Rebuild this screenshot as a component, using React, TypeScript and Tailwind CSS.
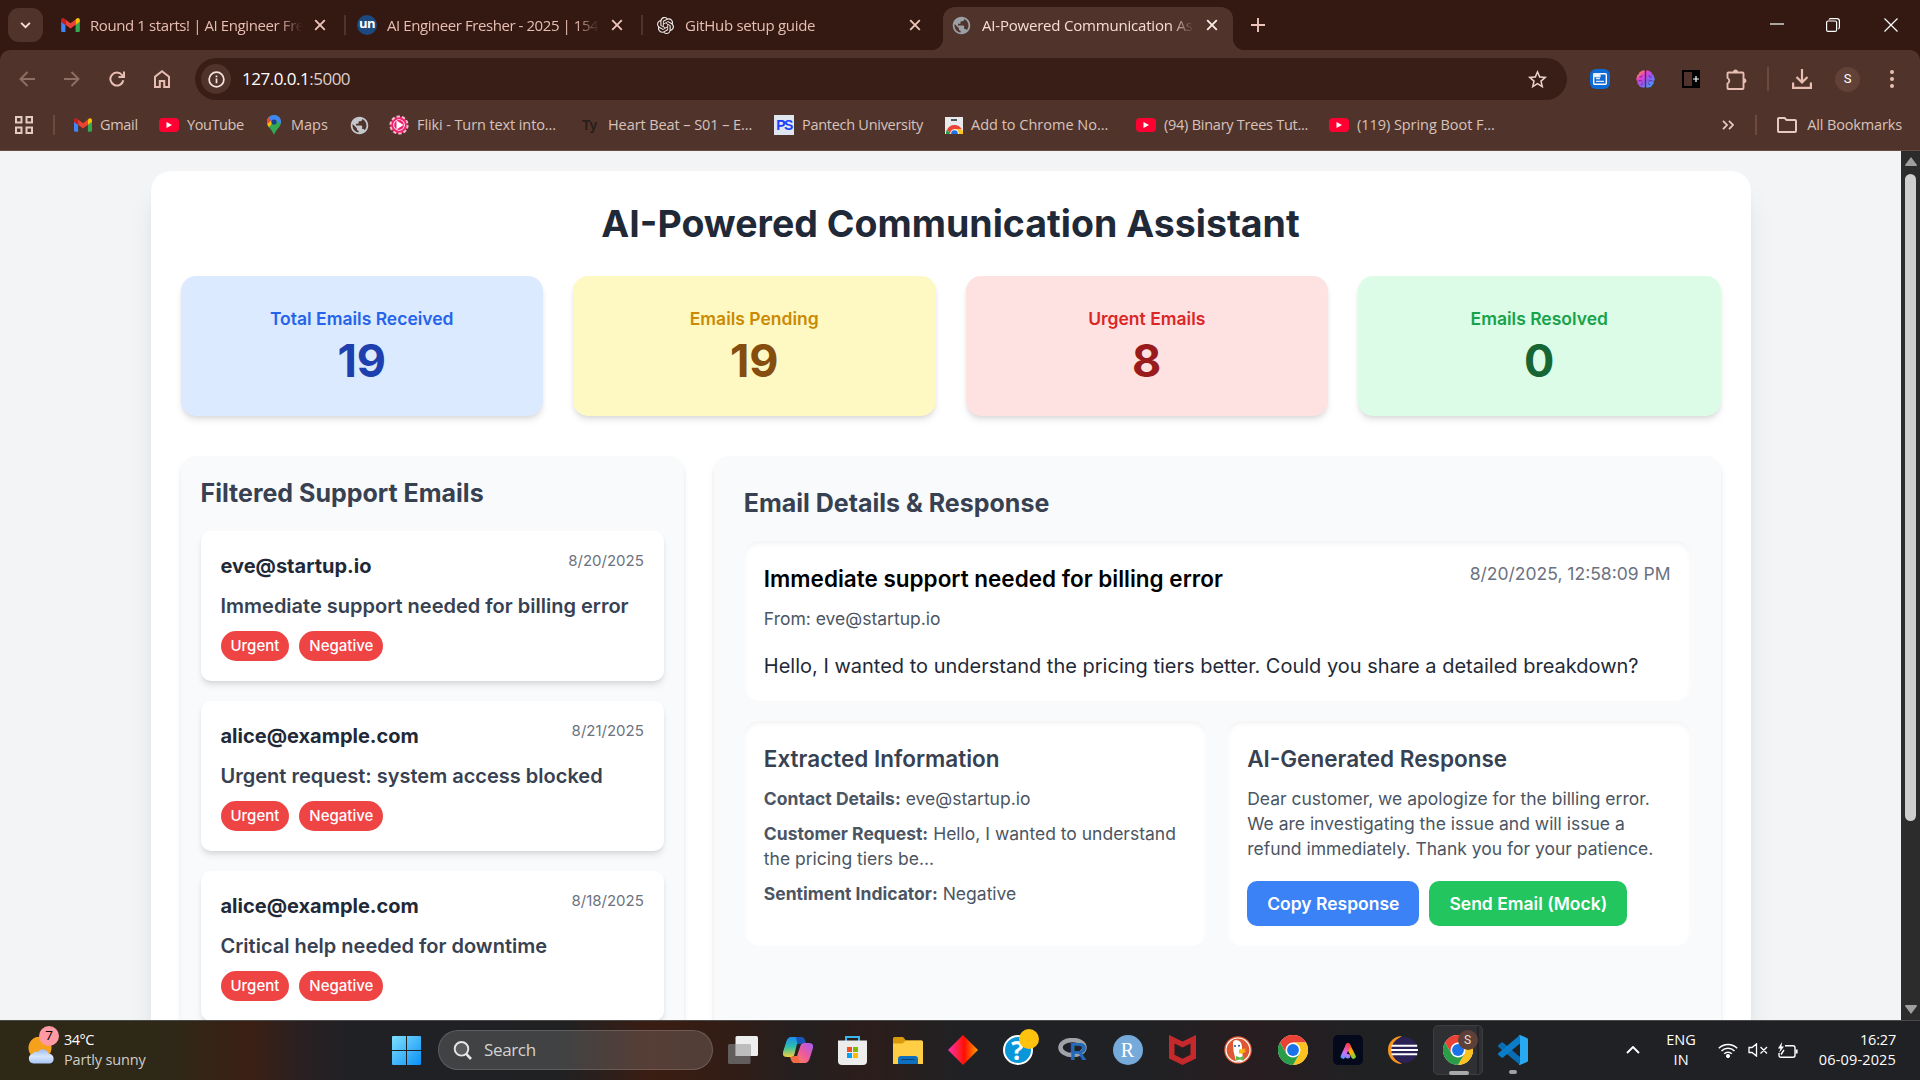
import React from "react";
import { MdPublic, MdOutlineStarBorder, MdOutlineFolder } from "react-icons/md";
import { SiOpenai } from "react-icons/si";

type IconProps = { className?: string };

function GmailIcon({ className = "" }: IconProps) {
  return (
    <svg viewBox="0 0 24 18" className={className}>
      <path d="M0 3v13.4C0 17.3.7 18 1.6 18H5.5V8.6L0 4.4z" fill="#4285f4" />
      <path d="M24 3v13.4c0 .9-.7 1.6-1.6 1.6h-3.9V8.6L24 4.4z" fill="#34a853" />
      <path d="M5.5 1.8v6.8L12 13.5l6.5-4.9V1.8L12 6.7z" fill="#ea4335" />
      <path d="M0 3v1.8l5.5 4.1V1.8L4 .6C2.300-.6 0 .4 0 3z" fill="#c5221f" />
      <path d="M24 3v1.8l-5.500 4.100V1.800L20 .6C21.700-.6 24 .4 24 3z" fill="#fbbc04" />
    </svg>
  );
}

function YouTubeIcon() {
  return (
    <span className="flex h-[14px] w-5 shrink-0 items-center justify-center rounded-[4px] bg-[#ff0033]">
      <svg viewBox="0 0 6 6" className="size-[6px]"><path d="M.5 0 6 3 .5 6z" fill="#fff" /></svg>
    </span>
  );
}

function MapsIcon() {
  return (
    <svg viewBox="0 0 14 20" className="h-[20px] w-[14px] shrink-0">
      <path d="M7 0C3.200 0 0 3.100 0 7c0 2 .8 3.600 2 5.200C4 14.700 5.800 16.500 7 20c1.200-3.500 3-5.300 5-7.800 1.200-1.600 2-3.200 2-5.200 0-3.900-3.200-7-7-7z" fill="#34a853" />
      <path d="M0 7c0 2 .8 3.600 2 5.200L9.300 3 1.600 2.500C.6 3.700 0 5.200 0 7z" fill="#fbbc04" />
      <path d="M1.600 2.500C.6 3.700 0 5.200 0 7l.3 2L5 4.800z" fill="#ea4335" />
      <path d="M7 0c3.800 0 7 3.100 7 7l-.4 2L9 5 5 7.500 1.600 2.500C2.900.9 4.800 0 7 0z" fill="#4285f4" />
      <circle cx="7" cy="7" r="2.600" fill="#1b3f8f" />
    </svg>
  );
}

function FlikiIcon() {
  return (
    <svg viewBox="0 0 20 20" className="size-5 shrink-0">
      <circle cx="10" cy="10" r="8.600" fill="#f0206c" stroke="#f7b9cb" strokeWidth="2" strokeDasharray="3.400 2" />
      <circle cx="10" cy="10" r="5.800" fill="#fff" />
      <circle cx="10" cy="10" r="4.900" fill="#f0206c" />
      <path d="M7.500 5.500 14.500 10l-7 4.500z" fill="#fff" />
    </svg>
  );
}

function BrainIcon({ className = "" }: IconProps) {
  return (
    <svg viewBox="0 0 20 19" className={className}>
      <defs>
        <linearGradient id="brain" gradientUnits="userSpaceOnUse" x1="2" y1="1" x2="18" y2="18">
          <stop offset="0" stopColor="#ff9a2c" />
          <stop offset=".3" stopColor="#e63fd0" />
          <stop offset=".6" stopColor="#8a5cf5" />
          <stop offset="1" stopColor="#2fb0ff" />
        </linearGradient>
      </defs>
      <path d="M9.300.8v17.400Q7.500 19.300 6 18 3.500 18.500 3 15.800.8 14.500 1.500 12-.6 9.800 1 7.300.8 5 3 4.200 3.300 1.500 5.800 1.300 7.500-.5 9.300.8z" fill="url(#brain)" />
      <path d="M10.700.8v17.400q1.800 1.100 3.300-.2 2.500.5 3-2.200 2.200-1.300 1.500-3.800 2.100-2.200.5-4.700.2-2.300-2-3.100-.3-2.700-2.800-2.900Q12.500-.5 10.700.8z" fill="url(#brain)" />
      <path d="M3.500 7.500Q6 8 6.500 5.500M2.500 11.500q3-1.500 4.500 1M5 15.500q1.500 0 2-1.500M16.500 7.500Q14 8 13.500 5.500M17.500 11.500q-3-1.500-4.500 1M15 15.500q-1.500 0-2-1.500" fill="none" stroke="#5a2a86" strokeWidth=".9" />
    </svg>
  );
}

function ChromeIcon({ className = "" }: IconProps) {
  return (
    <svg viewBox="0 0 48 48" className={className}>
      <circle cx="24" cy="24" r="24" fill="#fff" />
      <path d="M24 12h20.800A24 24 0 0 0 3.200 12l10.400 18z" fill="#ea4335" />
      <path d="M34.400 30 24 48A24 24 0 0 0 44.800 12H24z" fill="#fcc31e" />
      <path d="M13.600 30 3.200 12A24 24 0 0 0 24 48l10.400-18z" fill="#2b9c48" />
      <circle cx="24" cy="24" r="12" fill="#fff" />
      <circle cx="24" cy="24" r="9.500" fill="#1a73e8" />
    </svg>
  );
}

function CloseX({ className = "" }: IconProps) {
  return (
    <svg viewBox="0 0 12 12" className={`size-3 shrink-0 ${className}`} fill="none" stroke="currentColor" strokeWidth="1.900">
      <path d="M1.200 1.200l9.600 9.600M10.800 1.200l-9.600 9.600" />
    </svg>
  );
}

function Tab({ icon, title, width, tracking = "" }: { icon: React.ReactNode; title: string; width: string; tracking?: string }) {
  return (
    <div className={`flex h-full items-center ${width}`}>
      <span className="flex w-5 shrink-0 justify-center">{icon}</span>
      <span className={`ml-[10px] w-[212px] shrink-0 overflow-hidden whitespace-nowrap [mask-image:linear-gradient(to_right,black_89%,transparent)] ${tracking}`}>{title}</span>
      <CloseX className="ml-[12px] text-[#edc4b9]" />
    </div>
  );
}

function TabStrip() {
  return (
    <div className="flex h-[50px] items-center bg-[#331912] text-[15px] text-[#e8bdb2]">
      <div className="ml-2 flex h-[34px] w-[35px] shrink-0 items-center justify-center rounded-[11px] bg-[#50342c]">
        <svg viewBox="0 0 12 8" className="h-[7px] w-[11px]" fill="none" stroke="#f6dcd5" strokeWidth="2.200"><path d="M1 1l5 5 5-5" /></svg>
      </div>
      <div className="ml-[17px] flex h-full items-center">
        <Tab width="w-[284px]" icon={<GmailIcon className="h-[14px] w-[19px]" />} title="Round 1 starts! | AI Engineer Fresher" tracking="tracking-[-0.4px]" />
        <div className="mr-[11px] h-5 w-[2px] bg-[#50342c]" />
        <Tab
          width="w-[284px]"
          icon={<span className="flex size-5 items-center justify-center rounded-full bg-[#1c4980] font-['Open_Sans'] text-[13px] leading-none font-bold tracking-[-0.5px] text-white"><span className="-mt-[3px]">un</span></span>}
          title="AI Engineer Fresher - 2025 | 15402"
          tracking="tracking-[-0.43px]"
        />
        <div className="mr-[12px] h-5 w-[2px] bg-[#50342c]" />
        <Tab width="w-[288px]" icon={<SiOpenai className="size-[17px] text-[#f3f0ef]" />} title="GitHub setup guide" tracking="tracking-[-0.28px]" />
      </div>
      <div className="relative mt-[7px] flex h-[43px] w-[290px] shrink-0 items-center rounded-t-[12px] bg-[#50342c] pb-[7px] text-[#f6ddd6]">
        <span className="absolute bottom-0 -left-3 size-3 bg-[radial-gradient(circle_at_0_0,transparent_12px,#50342c_12.500px)]" />
        <span className="absolute -right-3 bottom-0 size-3 bg-[radial-gradient(circle_at_100%_0,transparent_12px,#50342c_12.500px)]" />
        <MdPublic className="ml-[8px] size-[21px] shrink-0 text-[#9aa0a6]" />
        <span className="ml-[10px] w-[212px] shrink-0 overflow-hidden whitespace-nowrap tracking-[-0.2px] [mask-image:linear-gradient(to_right,black_89%,transparent)]">AI-Powered Communication Assistant</span>
        <CloseX className="ml-[12px] text-[#fbe9e4]" />
      </div>
      <svg viewBox="0 0 14 14" className="ml-[18px] size-[14px]" stroke="#edc4b9" strokeWidth="1.900"><path d="M7 0v14M0 7h14" /></svg>
      <div className="ml-auto flex items-center">
        <svg viewBox="0 0 14 14" className="size-[14px]" stroke="#fff" strokeWidth="1.200"><path d="M0 6h14" /></svg>
        <svg viewBox="0 0 14 14" className="ml-[42px] size-[14px]" fill="none" stroke="#fff" strokeWidth="1.200">
          <rect x=".6" y="3" width="10" height="10.400" rx="1.500" /><path d="M3 1.500Q3.500.6 5 .6h6a2.400 2.400 0 0 1 2.400 2.400v6q0 1.500-1 2" />
        </svg>
        <svg viewBox="0 0 14 14" className="mr-[22px] ml-[44px] size-[14px]" stroke="#fff" strokeWidth="1.200"><path d="M.5.5l13 13M13.500.5l-13 13" /></svg>
      </div>
    </div>
  );
}

function Toolbar() {
  return (
    <div className="flex h-[58px] items-center rounded-t-[10px] bg-[#50342c] text-[#e8bdb2]">
      <svg viewBox="0 0 16 16" className="ml-[19px] size-4 text-[#8e6f66]" fill="none" stroke="currentColor" strokeWidth="1.900"><path d="M16 8H1.500M8.500 1 1.500 8l7 7" /></svg>
      <svg viewBox="0 0 16 16" className="ml-[29px] size-4 text-[#8e6f66]" fill="none" stroke="currentColor" strokeWidth="1.900"><path d="M0 8h14.500M7.500 1l7 7-7 7" /></svg>
      <svg viewBox="0 0 16 16" className="ml-[29px] size-4" fill="none" stroke="currentColor" strokeWidth="2"><path d="M14.300 9.200A6.500 6.500 0 1 1 13 4l1.500 1.700" /><path d="M15 .5V6H9.500" /></svg>
      <svg viewBox="0 0 16 18" className="ml-[29px] h-[18px] w-4" fill="none" stroke="currentColor" strokeWidth="2"><path d="M1 17V6.800L8 1.300l7 5.500V17h-4.800v-6H5.800v6z" /></svg>
      <div className="ml-[25px] flex h-[42px] w-[1372px] shrink-0 items-center rounded-full bg-[#391e17]">
        <span className="ml-[6px] flex size-[30px] items-center justify-center rounded-full bg-[#50342c]">
          <svg viewBox="0 0 18 18" className="size-[17px]" fill="none" stroke="#f7e3dd" strokeWidth="1.800"><circle cx="9" cy="9" r="7.800" /><path d="M9 8v5M9 4.800v1.800" /></svg>
        </span>
        <span className="ml-[11px] text-[17px] tracking-[-0.5px] text-[#dcd0cc]"><span className="text-white">127.0.0.1</span>:5000</span>
        <MdOutlineStarBorder className="mr-[18px] ml-auto size-[23px] text-[#e9d3cc]" />
      </div>
      <div className="ml-[23px] flex size-5 items-center justify-center rounded-[6px] bg-[#0d6bd6]">
        <svg viewBox="0 0 14 12" className="h-[12px] w-[14px]"><rect x=".7" y=".7" width="12.600" height="10.600" rx="1" fill="#1268cf" stroke="#fff" strokeWidth="1.400" /><path d="M1 1h6v2.500H1zM3 5.500h4M3 8.300h8" fill="#fff" stroke="#dbe9fa" strokeWidth="1.300" /></svg>
      </div>
      <BrainIcon className="ml-[26px] h-[18px] w-[19px]" />
      <div className="ml-[27px] flex h-[18px] w-[18px] items-center bg-black">
        <span className="ml-[2px] h-[14px] w-[8px] bg-[#50342c]" />
        <svg viewBox="0 0 6 6" className="ml-px size-[6px]" stroke="#fff" strokeWidth="1.200"><path d="M3 0v6M0 3h6" /></svg>
      </div>
      <svg viewBox="0 0 21 21" className="ml-[26px] size-[21px] overflow-visible" fill="none" stroke="#e8bdb2" strokeWidth="1.900">
        <path d="M2.500 3.500H16.500a1 1 0 0 1 1 1V19a1 1 0 0 1-1 1H2.500a1 1 0 0 1-1-1v-4.500a3 3 0 0 0 0-5.500V4.500a1 1 0 0 1 1-1z" />
        <path d="M7 3a2.500 2.500 0 0 1 5 0zM18 9.200a2.500 2.500 0 0 1 0 5z" fill="#e8bdb2" stroke="none" />
      </svg>
      <div className="ml-[20px] h-[24px] w-[2px] bg-[#6d4a40]" />
      <svg viewBox="0 0 20 20" className="ml-[23px] size-5" fill="none" stroke="#e8bdb2" strokeWidth="2.200"><path d="M10 0v13M4.500 8l5.500 5.500L15.500 8M1.100 13.500v5.400h17.800v-5.400" /></svg>
      <span className="ml-[23px] flex size-[25px] items-center justify-center rounded-full bg-[#624238] font-['Roboto'] text-[13px] text-white">S</span>
      <svg viewBox="0 0 4 18" className="ml-[30px] h-[18px] w-1" fill="#e8bdb2"><circle cx="2" cy="2" r="2" /><circle cx="2" cy="9" r="2" /><circle cx="2" cy="16" r="2" /></svg>
    </div>
  );
}

function Bookmark({ icon, label, className }: { icon: React.ReactNode; label: string; className: string }) {
  return (
    <div className={`flex shrink-0 items-center whitespace-nowrap ${className}`}>
      {icon}
      <span className="ml-[8px]">{label}</span>
    </div>
  );
}

function BookmarksBar() {
  return (
    <div className="flex h-[43px] items-center border-b border-[#6b4a41] bg-[#50342c] pb-[8px] text-[14.500px] text-[#d8c2bb]">
      <svg viewBox="0 0 18 18" className="ml-[15px] size-[18px]" fill="none" stroke="#e3cac3" strokeWidth="2"><path d="M1 1h5.500v5.500H1zM11.500 1H17v5.500h-5.500zM1 11.500h5.500V17H1zM11.500 11.500H17V17h-5.500z" /></svg>
      <div className="ml-[20px] h-5 w-[2px] bg-[#6d4a40]" />
      <Bookmark className="ml-[19px] w-[85px] tracking-[-0.3px]" icon={<GmailIcon className="h-[14px] w-[18px]" />} label="Gmail" />
      <Bookmark className="w-[108px] tracking-[-0.4px]" icon={<YouTubeIcon />} label="YouTube" />
      <Bookmark className="w-[82px]" icon={<span className="mr-[2px]"><MapsIcon /></span>} label="Maps" />
      <MdPublic className="size-[21px] shrink-0 text-[#c4c7cc]" />
      <Bookmark className="ml-[19px] w-[193px] tracking-[-0.1px]" icon={<FlikiIcon />} label="Fliki - Turn text into..." />
      <Bookmark className="w-[192px] tracking-[-0.08px]" icon={<span className="w-[18px] font-['Liberation_Sans'] text-[14px] font-bold text-[#2b1d19]">Ty</span>} label="Heart Beat – S01 – E..." />
      <Bookmark
        className="w-[171px] tracking-[-0.28px]"
        icon={<span className="flex h-5 w-5 items-center justify-center bg-[#dfe6ef] font-['Liberation_Sans'] text-[14px] leading-none font-bold tracking-[-1.500px] text-[#1f3dff]">PS</span>}
        label="Pantech University"
      />
      <Bookmark
        className="w-[191px]"
        icon={<span className="flex h-[17px] w-[18px] flex-col items-center overflow-hidden bg-[#e8eaed]"><span className="mt-[2px] h-[2px] w-[6px] shrink-0 bg-[#555]" /><ChromeIcon className="mt-[4px] size-[17px] shrink-0" /></span>}
        label="Add to Chrome No..."
      />
      <Bookmark className="w-[193px] tracking-[-0.25px]" icon={<YouTubeIcon />} label="(94) Binary Trees Tut..." />
      <Bookmark className="tracking-[-0.05px]" icon={<YouTubeIcon />} label="(119) Spring Boot F..." />
      <svg viewBox="0 0 12 10" className="ml-auto h-[10px] w-3" fill="none" stroke="#e3cac3" strokeWidth="1.800"><path d="M1 .8 5 5 1 9.200M7 .8 11 5 7 9.200" /></svg>
      <div className="ml-[21px] h-5 w-[2px] bg-[#6d4a40]" />
      <MdOutlineFolder className="ml-[18px] size-[24px] text-[#e3cac3]" />
      <span className="mr-[18px] ml-[8px] tracking-[-0.15px]">All Bookmarks</span>
    </div>
  );
}

const stats = [
  { label: "Total Emails Received", value: 19, box: "bg-[#dbeafe]", labelColor: "text-[#2563eb]", valueColor: "text-[#1e40af]" },
  { label: "Emails Pending", value: 19, box: "bg-[#fef9c3]", labelColor: "text-[#ca8a04]", valueColor: "text-[#854d0e]" },
  { label: "Urgent Emails", value: 8, box: "bg-[#fee2e2]", labelColor: "text-[#dc2626]", valueColor: "text-[#991b1b]" },
  { label: "Emails Resolved", value: 0, box: "bg-[#dcfce7]", labelColor: "text-[#16a34a]", valueColor: "text-[#166534]" },
];

const emails = [
  { from: "eve@startup.io", date: "8/20/2025", subject: "Immediate support needed for billing error" },
  { from: "alice@example.com", date: "8/21/2025", subject: "Urgent request: system access blocked" },
  { from: "alice@example.com", date: "8/18/2025", subject: "Critical help needed for downtime" },
];

function Dashboard() {
  return (
    <div className="min-w-0 flex-1 overflow-hidden bg-[#f3f4f6]">
      <div className="p-4 font-['Inter',sans-serif] text-black [zoom:1.25]">
        <div className="mx-auto w-[1280px] max-w-7xl rounded-2xl bg-white p-6 shadow-xl">
          <h1 className="mb-6 text-center text-3xl font-bold text-[#1f2937]">AI-Powered Communication Assistant</h1>
          <div className="mb-8 grid grid-cols-4 gap-6">
            {stats.map((s) => (
              <div key={s.label} className={`rounded-xl p-6 text-center shadow-md ${s.box}`}>
                <p className={`text-sm font-semibold ${s.labelColor}`}>{s.label}</p>
                <p className={`mt-1 text-4xl font-bold ${s.valueColor}`}>{s.value}</p>
              </div>
            ))}
          </div>
          <div className="grid grid-cols-[1fr_2fr] gap-6">
            <div className="rounded-xl bg-[#f9fafb] p-4 shadow-md">
              <h2 className="mb-4 text-xl font-bold text-[#374151]">Filtered Support Emails</h2>
              <div className="space-y-4">
                {emails.map((m) => (
                  <div key={m.date} className="rounded-lg bg-white p-4 shadow-md">
                    <div className="mb-2 flex items-start justify-between">
                      <h3 className="font-bold text-[#1f2937]">{m.from}</h3>
                      <span className="text-xs text-[#6b7280]">{m.date}</span>
                    </div>
                    <p className="font-semibold text-[#374151]">{m.subject}</p>
                    <div className="mt-2 flex gap-2 text-xs font-medium text-white">
                      <span className="rounded-full bg-[#ef4444] px-2 py-1">Urgent</span>
                      <span className="rounded-full bg-[#ef4444] px-2 py-1">Negative</span>
                    </div>
                  </div>
                ))}
              </div>
            </div>
            <div className="rounded-xl bg-[#f9fafb] p-6 shadow-md">
              <h2 className="mb-4 text-xl font-bold text-[#374151]">Email Details &amp; Response</h2>
              <div className="mb-4 rounded-xl bg-white p-4 shadow-[inset_0_2px_4px_0_rgb(0_0_0/0.05)]">
                <div className="mb-2 flex items-start justify-between">
                  <h3 className="text-lg font-semibold">Immediate support needed for billing error</h3>
                  <span className="text-sm text-[#6b7280]">8/20/2025, 12:58:09 PM</span>
                </div>
                <p className="mb-4 text-sm text-[#4b5563]">From: eve@startup.io</p>
                <p className="text-[#1f2937]">Hello, I wanted to understand the pricing tiers better. Could you share a detailed breakdown?</p>
              </div>
              <div className="grid grid-cols-2 gap-4">
                <div className="rounded-xl bg-white p-4 shadow-[inset_0_2px_4px_0_rgb(0_0_0/0.05)]">
                  <h4 className="mb-2 text-lg font-semibold text-[#374151]">Extracted Information</h4>
                  <div className="space-y-2 text-sm text-[#4b5563]">
                    <p><strong className="font-bold">Contact Details:</strong> eve@startup.io</p>
                    <p><strong className="font-bold">Customer Request:</strong> Hello, I wanted to understand the pricing tiers be...</p>
                    <p><strong className="font-bold">Sentiment Indicator:</strong> Negative</p>
                  </div>
                </div>
                <div className="rounded-xl bg-white p-4 shadow-[inset_0_2px_4px_0_rgb(0_0_0/0.05)]">
                  <h4 className="mb-2 text-lg font-semibold text-[#374151]">AI-Generated Response</h4>
                  <p className="text-sm text-[#4b5563]">Dear customer, we apologize for the billing error. We are investigating the issue and will issue a refund immediately. Thank you for your patience.</p>
                  <div className="mt-4 flex gap-2 text-sm font-semibold text-white">
                    <button className="rounded-lg bg-[#3b82f6] px-4 py-2">Copy Response</button>
                    <button className="rounded-lg bg-[#22c55e] px-4 py-2">Send Email (Mock)</button>
                  </div>
                </div>
              </div>
            </div>
          </div>
        </div>
      </div>
    </div>
  );
}

function Scrollbar() {
  return (
    <div className="flex w-[19px] shrink-0 flex-col items-center bg-[#2c2c2c] py-[6px]">
      <svg viewBox="0 0 12 9" className="h-[9px] w-3" fill="#9f9f9f"><path d="M6 0l6 8q0 1-1 1H1q-1 0-1-1z" /></svg>
      <div className="mt-[8px] h-[647px] w-[11px] rounded-full bg-[#cfcfcf]" />
      <svg viewBox="0 0 12 9" className="mt-auto h-[9px] w-3" fill="#9f9f9f"><path d="M6 9L0 1q0-1 1-1h10q1 0 1 1z" /></svg>
    </div>
  );
}

function Slot({ children }: { children: React.ReactNode }) {
  return <div className="flex h-full w-[55px] shrink-0 items-center justify-center">{children}</div>;
}

function TaskIcons() {
  return (
    <div className="ml-[2px] flex h-full items-center">
      <Slot>
        <svg viewBox="0 0 30 28" className="h-7 w-[30px]"><rect x="7.500" width="22.500" height="20" rx="1.500" fill="#eee" /><rect y="8" width="22.500" height="20" rx="1.500" fill="#6a6a6a" fillOpacity=".85" /><rect x="7.500" y="8" width="15" height="12" fill="#bdbdbd" /></svg>
      </Slot>
      <Slot>
        <svg viewBox="0 0 30 26" className="h-[26px] w-[30px]">
          <defs>
            <linearGradient id="cpA" x1="0" y1="0" x2="0" y2="1"><stop offset="0" stopColor="#1b8df0" /><stop offset=".5" stopColor="#2fc0a8" /><stop offset="1" stopColor="#f4d03c" /></linearGradient>
            <linearGradient id="cpB" x1="1" y1="0" x2="0" y2="1"><stop offset="0" stopColor="#a45cf5" /><stop offset=".5" stopColor="#ee5a9c" /><stop offset="1" stopColor="#ff8b45" /></linearGradient>
          </defs>
          <path d="M8 0h11l-2 3-5 14q-1 3-4 3H4q-5 0-4-5L3.500 4Q5 0 8 0z" fill="url(#cpA)" />
          <path d="M22 26H11q-2 0 0-4l6-13q1-3 4-3h5q5 0 4 5l-3.500 11Q25 26 22 26z" fill="url(#cpB)" />
          <path d="M13 0h6q2 0 3 3l1 3h-2q-3 0-4 3l-1.500 4z" fill="#1c55b8" />
          <path d="M17 26h-6q-2 0-3-3l-1-3h1q3 0 4-3l1.500-4z" fill="#f06a45" />
          <path d="M14 7h4l-4 12h-3z" fill="#29201f" />
        </svg>
      </Slot>
      <Slot>
        <svg viewBox="0 0 29 29" className="size-[29px]"><path d="M8 5V1h13v4" fill="none" stroke="#39b6ee" strokeWidth="2" /><path d="M0 4.500h29V25a4 4 0 0 1-4 4H4a4 4 0 0 1-4-4z" fill="#ececec" /><path d="M9 11h5v5H9z" fill="#f25022" /><path d="M15 11h5v5h-5z" fill="#7fba00" /><path d="M9 17h5v5H9z" fill="#00a4ef" /><path d="M15 17h5v5h-5z" fill="#ffb900" /></svg>
      </Slot>
      <Slot>
        <svg viewBox="0 0 30 27" className="h-[27px] w-[30px]"><path d="M0 1.500Q0 0 1.500 0H10l3 3.500h16L30 9H0z" fill="#d99a0b" /><path d="M0 6.500h9.500L13 3.500h15.500Q30 3.500 30 5v22H0z" fill="#ffce45" /><path d="M5 27v-5q0-3 3-3h14q3 0 3 3v5z" fill="#0f6fbf" /><path d="M8.500 22.500h13" stroke="#0a4275" /></svg>
      </Slot>
      <Slot>
        <svg viewBox="0 0 30 30" className="size-[30px]"><defs><linearGradient id="dia"><stop offset="0" stopColor="#ff2fb0" /><stop offset=".35" stopColor="#ff2040" /><stop offset=".55" stopColor="#ff1000" /><stop offset="1" stopColor="#ffa000" /></linearGradient></defs><path d="M15 0l15 15-15 15L0 15z" fill="url(#dia)" /></svg>
      </Slot>
      <Slot>
        <span className="relative flex size-[30px] items-center justify-center rounded-full border-2 border-white bg-[#0a97d9] font-['Open_Sans'] text-[26px] leading-none font-bold text-white">
          ?<span className="absolute -top-[8px] -right-[8px] size-5 rounded-full bg-[#ffc20e]" />
        </span>
      </Slot>
      <Slot>
        <span className="relative h-[24px] w-[30px]">
          <svg viewBox="0 0 30 20" className="h-5 w-[30px]"><ellipse cx="14.500" cy="9.500" rx="12" ry="7.500" fill="none" stroke="#9fa2a8" strokeWidth="4.500" /></svg>
          <span className="absolute top-[2px] left-[12px] font-['Liberation_Sans'] text-[24px] leading-none font-bold text-[#2468ba]">R</span>
        </span>
      </Slot>
      <Slot><span className="flex size-[30px] items-center justify-center rounded-full bg-[#75aadb] font-['Liberation_Serif'] text-[20px] leading-none text-white">R</span></Slot>
      <Slot>
        <svg viewBox="0 0 27 30" className="h-[30px] w-[27px]"><path d="M0 0l13.500 6.500L27 0v23.500L13.500 30 0 23.500zM5.500 8.500v11.300l8 3.900 8-3.900V8.500l-8 4z" fill="#c5292c" fillRule="evenodd" /></svg>
      </Slot>
      <Slot>
        <svg viewBox="0 0 28 28" className="size-[28px]">
          <circle cx="14" cy="14" r="13.800" fill="#de5833" /><circle cx="14" cy="14" r="12" fill="none" stroke="#fff" strokeWidth="1.200" />
          <path d="M9 7q0-3 3.500-3Q18 5 18 11v3l1 10q-3 2-7 1.500L9.500 15z" fill="#fff" />
          <path d="M15 13.500l7-1-2 2 2.500.5-4 2.500H15z" fill="#fdb813" /><path d="M12 20l4 1.500 4-2v5l-4-1-4 1z" fill="#5bb947" /><circle cx="15" cy="9.800" r="1" fill="#2d4f8e" /><circle cx="11" cy="10" r="1" fill="#2d4f8e" />
        </svg>
      </Slot>
      <Slot><ChromeIcon className="size-[30px]" /></Slot>
      <Slot>
        <span className="flex size-[30px] items-center justify-center rounded-[5px] bg-[#040a1c]">
          <svg viewBox="0 0 16 17" className="h-[17px] w-4">
            <defs>
              <linearGradient id="axL" gradientUnits="userSpaceOnUse" x1="1" y1="16" x2="7" y2="2"><stop offset="0" stopColor="#4a9bff" /><stop offset=".4" stopColor="#d070ff" /><stop offset="1" stopColor="#ff3c4c" /></linearGradient>
              <linearGradient id="axR" gradientUnits="userSpaceOnUse" x1="8" y1="2" x2="14" y2="16"><stop offset="0" stopColor="#ff3c2c" /><stop offset=".55" stopColor="#ffb300" /><stop offset="1" stopColor="#6ed43a" /></linearGradient>
            </defs>
            <path d="M8 3.500 13.500 14.500" fill="none" stroke="url(#axR)" strokeWidth="4.600" strokeLinecap="round" />
            <path d="M8 3.500 3 14.500M7.500 14.300H8" fill="none" stroke="url(#axL)" strokeWidth="4.600" strokeLinecap="round" />
          </svg>
        </span>
      </Slot>
      <Slot>
        <svg viewBox="0 0 30 28" className="h-7 w-[30px]"><path d="M14 0A14 14 0 0 0 14 28 16 16 0 0 1 14 0z" fill="#f7941e" /><circle cx="16.500" cy="14" r="13" fill="#2c2255" /><path d="M3.600 9.800h25.600M3 14h27M3.600 18.200h25.600" stroke="#fff" strokeWidth="1.900" /></svg>
      </Slot>
      <Slot>
        <span className="relative flex h-[50px] w-[50px] shrink-0 items-center justify-center rounded-[5px] border border-[#3c3e41] bg-[#2e3033]">
          <span className="absolute inset-y-0 right-[3px] w-[2px] rounded-r bg-[#222326]" />
          <ChromeIcon className="size-[30px]" />
          <span className="absolute top-[4px] right-[4px] flex size-5 items-center justify-center rounded-full bg-[#5d4037] font-['Roboto'] text-[12px] leading-none text-[#e8dcd8]">S</span>
          <span className="absolute -bottom-px left-[15px] h-1 w-5 rounded-full bg-[#a9a9a9]" />
        </span>
      </Slot>
      <Slot>
        <span className="relative size-[30px]">
          <svg viewBox="0 0 30 30" className="size-[30px]"><path d="M22 30v-8L5 7.500q-.8-.5-1.500 0L.5 10q-1 1 0 2z" fill="#0a6db3" /><path d="M.5 20q-1-1 0-2L22 0v8.500L5 22.500q-.8.500-1.500 0z" fill="#0b7dc8" /><path d="M22 0l7 3q1 .6 1 1.500v21q0 1-1 1.500l-7 3q-1 0-1.500-.8.8.3 1.500-.7V1.500Q22 .5 20.500.8q.6-.8 1.500-.8z" fill="#29a9f2" /></svg>
          <span className="absolute -bottom-[9px] left-[11px] h-1 w-2 rounded-full bg-[#a0a0a0]" />
        </span>
      </Slot>
    </div>
  );
}

function Taskbar() {
  return (
    <div className="flex h-[60px] items-center border-t border-[#4a4a48] bg-[linear-gradient(90deg,#2e2817_0px,#2f2818_170px,#3b2014_250px,#2a2021_300px,#202125_350px,#202123_560px,#3a1d13_650px,#321d16_730px,#241f20_800px,#2c1d1a_870px,#202124_960px,#202124_1140px,#281d20_1250px,#202123_1360px,#202125_1920px)] pb-px text-white">
      <div className="flex w-[392px] shrink-0 items-center pl-[28px]">
        <div className="relative h-[27px] w-[27px] shrink-0">
          <svg viewBox="0 0 27 27" className="size-[27px]">
            <defs><linearGradient id="cloud" x1="0" y1="0" x2="0" y2="1"><stop offset="0" stopColor="#9dbcf0" /><stop offset=".5" stopColor="#d8e6fb" /><stop offset="1" stopColor="#a9c6f6" /></linearGradient></defs>
            <circle cx="12" cy="11" r="11.500" fill="#f6a11c" /><path d="M5.500 26.500a5 5 0 0 1-1-9.800 5.200 5.200 0 0 1 5.700-2 6 6 0 0 1 10.500 2A5 5 0 0 1 22 26.500z" fill="url(#cloud)" />
          </svg>
          <span className="absolute -top-[11px] left-[11px] flex size-[20px] items-center justify-center rounded-full bg-[#ff99a4] text-[13.500px] leading-none text-black">7</span>
        </div>
        <div className="mb-px ml-[9px] text-[14.500px] leading-[20px]">
          <p className="tracking-[-0.5px]">34°C</p>
          <p className="tracking-[-0.15px] text-[#cfcdc8]">Partly sunny</p>
        </div>
      </div>
      <svg viewBox="0 0 29 29" className="size-[29px] shrink-0"><defs><linearGradient id="win" x1="0" y1="0" x2="1" y2="1"><stop offset="0" stopColor="#7fe0ff" /><stop offset="1" stopColor="#0a90f5" /></linearGradient></defs><path d="M1 0h13v14H0V1q0-1 1-1zM15 0h13q1 0 1 1v13H15zM0 15h14v14H1q-1 0-1-1zM15 15h14v13q0 1-1 1H15z" fill="url(#win)" /></svg>
      <div className="ml-[17px] flex h-10 w-[275px] shrink-0 items-center rounded-full border border-white/15 bg-white/15">
        <svg viewBox="0 0 19 19" className="ml-[14px] size-[19px]" fill="none" stroke="#e6e6e6" strokeWidth="1.900"><circle cx="8.500" cy="7.800" r="6.800" fill="#ffffff22" /><path d="M13.200 12.800 18 18" strokeWidth="2.600" /></svg>
        <span className="ml-[12px] text-[17px] tracking-[-0.35px] text-[#d4d2d1]">Search</span>
      </div>
      <TaskIcons />
      <div className="ml-auto flex items-center">
        <svg viewBox="0 0 14 8" className="h-2 w-[14px]" fill="none" stroke="#fff" strokeWidth="1.900"><path d="M1 7l6-6 6 6" /></svg>
        <div className="mb-px ml-[26px] text-center text-[14.500px] leading-[20px]"><p>ENG</p><p>IN</p></div>
        <svg viewBox="0 0 20 15" className="ml-[22px] h-[15px] w-5" fill="none" stroke="#fff" strokeWidth="1.500"><path d="M.8 5.200a13 13 0 0 1 18.400 0M3.500 8a9.200 9.200 0 0 1 13 0M6.200 10.700a5.400 5.400 0 0 1 7.600 0" /><circle cx="10" cy="13" r="1.300" fill="#fff" /></svg>
        <svg viewBox="0 0 20 14" className="ml-[10px] h-[14px] w-5" fill="none" stroke="#fff" strokeWidth="1.300"><path d="M1 4.500h3L8.500.9v12.200L4 9.500H1zM12.500 4l6.500 6.500M19 4l-6.500 6.500" /></svg>
        <svg viewBox="0 0 21 17" className="mr-px ml-[9px] h-[17px] w-[21px]" fill="none" stroke="#fff" strokeWidth="1.400"><path d="M8 3.700h8q2 0 2 2v7.600q0 2-2 2H4q-2 0-2-2V11" /><path d="M5 0 1 6.500h2.500L2 11l5-6.500H4.500z" fill="#fff" stroke="none" /><path d="M19.600 7.500v4" strokeWidth="2" /><path d="M4 12.500 7 8" /></svg>
        <div className="mr-[24px] mb-px ml-[20px] text-right text-[14.500px] leading-[20px]"><p className="tracking-[-0.2px]">16:27</p><p className="tracking-[0.15px]">06-09-2025</p></div>
      </div>
    </div>
  );
}

export default function App() {
  return (
    <div className="flex h-[1080px] w-[1920px] flex-col overflow-hidden bg-[#331912] font-['Open_Sans','Noto_Sans',sans-serif]">
      <TabStrip />
      <Toolbar />
      <BookmarksBar />
      <div className="flex min-h-0 flex-1">
        <Dashboard />
        <Scrollbar />
      </div>
      <Taskbar />
    </div>
  );
}
